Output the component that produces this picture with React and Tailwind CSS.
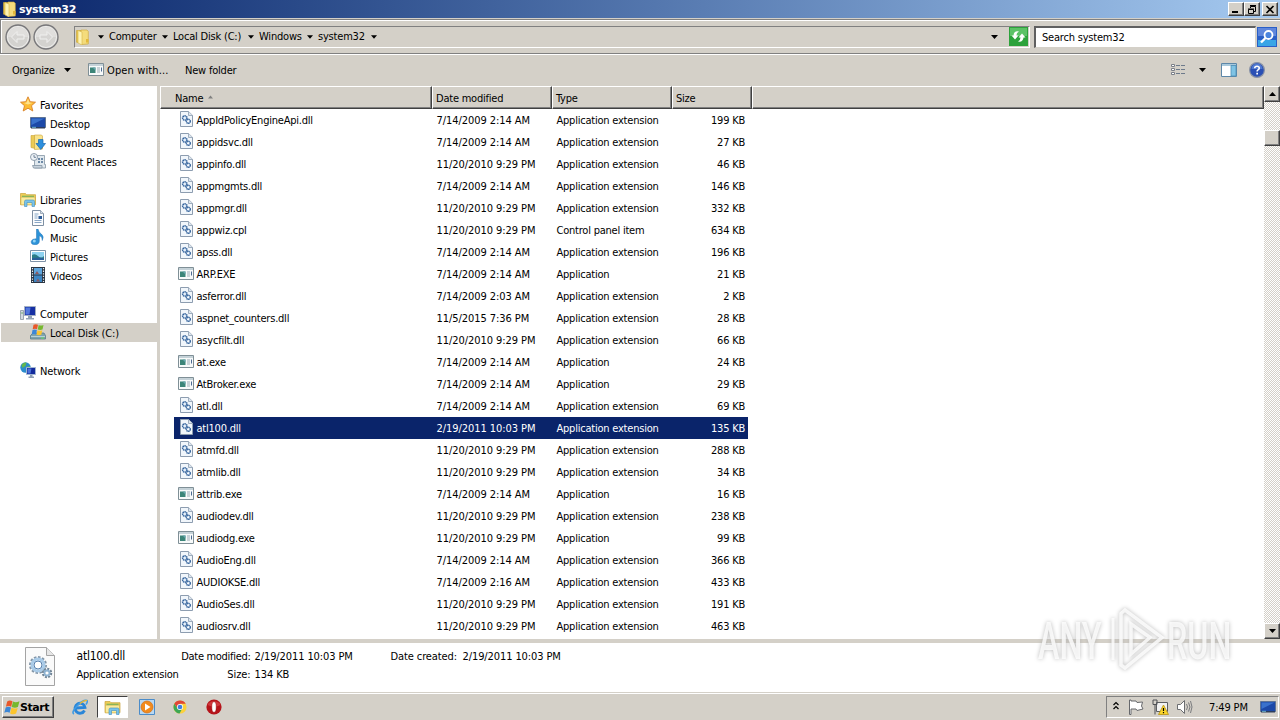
import clsx from 'clsx';

const DLL = 'Application extension';
const EXE = 'Application';

const files = [
    ['AppIdPolicyEngineApi.dll', '7/14/2009 2:14 AM', DLL, '199 KB'],
    ['appidsvc.dll', '7/14/2009 2:14 AM', DLL, '27 KB'],
    ['appinfo.dll', '11/20/2010 9:29 PM', DLL, '46 KB'],
    ['appmgmts.dll', '7/14/2009 2:14 AM', DLL, '146 KB'],
    ['appmgr.dll', '11/20/2010 9:29 PM', DLL, '332 KB'],
    ['appwiz.cpl', '11/20/2010 9:29 PM', 'Control panel item', '634 KB'],
    ['apss.dll', '7/14/2009 2:14 AM', DLL, '196 KB'],
    ['ARP.EXE', '7/14/2009 2:14 AM', EXE, '21 KB'],
    ['asferror.dll', '7/14/2009 2:03 AM', DLL, '2 KB'],
    ['aspnet_counters.dll', '11/5/2015 7:36 PM', DLL, '28 KB'],
    ['asycfilt.dll', '11/20/2010 9:29 PM', DLL, '66 KB'],
    ['at.exe', '7/14/2009 2:14 AM', EXE, '24 KB'],
    ['AtBroker.exe', '7/14/2009 2:14 AM', EXE, '29 KB'],
    ['atl.dll', '7/14/2009 2:14 AM', DLL, '69 KB'],
    ['atl100.dll', '2/19/2011 10:03 PM', DLL, '135 KB'],
    ['atmfd.dll', '11/20/2010 9:29 PM', DLL, '288 KB'],
    ['atmlib.dll', '11/20/2010 9:29 PM', DLL, '34 KB'],
    ['attrib.exe', '7/14/2009 2:14 AM', EXE, '16 KB'],
    ['audiodev.dll', '11/20/2010 9:29 PM', DLL, '238 KB'],
    ['audiodg.exe', '11/20/2010 9:29 PM', EXE, '99 KB'],
    ['AudioEng.dll', '7/14/2009 2:14 AM', DLL, '366 KB'],
    ['AUDIOKSE.dll', '7/14/2009 2:16 AM', DLL, '433 KB'],
    ['AudioSes.dll', '11/20/2010 9:29 PM', DLL, '191 KB'],
    ['audiosrv.dll', '11/20/2010 9:29 PM', DLL, '463 KB'],
];

const Svg = ({ w = 16, h = 16, box, className, children }) => (
    <svg width={w} height={h} viewBox={box || `0 0 ${w} ${h}`} className={clsx('shrink-0', className)}>
        {children}
    </svg>
);

const Caret = ({ up, w = 7, className }) => (
    <Svg w={w} h={4} box="0 0 7 4" className={className}>
        <path d={up ? 'M0 4h7L3.5 0z' : 'M0 0h7L3.5 4z'} fill="currentColor" />
    </Svg>
);

const FolderIcon = ({ className }) => (
    <Svg className={className}>
        <path d="M1.5 1.5h5v12.5l-5-.8z" fill="#e9c84c" stroke="#c9a437" strokeWidth=".6" />
        <path d="M6 1h6l1.3 1.5V15L6 15.6z" fill="#f4dc7c" stroke="#c9a437" strokeWidth=".6" />
        <path d="M3 1.5 7 3v13l-4-2z" fill="#fdf3b4" stroke="#d7b548" strokeWidth=".6" />
        <path d="M11 10h2.5v3.5H11z" fill="#e2b93a" />
    </Svg>
);

const LibraryIcon = ({ w = 16, h = 16 }) => (
    <Svg w={w} h={h} box="0 0 16 16">
        <path d="M.5 2.500h5l1 1.200h9v10H.500z" fill="#efcd55" stroke="#c9a23a" strokeWidth=".7" />
        <path d="M2 4.700h12v2H2z" fill="#7db65f" />
        <path d="M1 6.200h14v7.600H1z" fill="#faeb9c" stroke="#d0ad47" strokeWidth=".5" />
        <path d="M4.500 15.500v-5q0-1.500 1.500-1.500h7q1.500 0 1.500 1.500v5h-2.500V11.500H7v4z" fill="#79c3ea" stroke="#3f8dc0" strokeWidth=".6" />
    </Svg>
);

const DllIcon = () => (
    <Svg w={14} h={16} className="mb-[3px] ml-px">
        <path d="M1.500.500h8l4 3.800V15.500h-12z" fill="#f1f6fb" stroke="#8d9db0" />
        <path d="M9.500.500v4h4" fill="#dde5ee" stroke="#8d9db0" strokeWidth=".8" />
        <circle cx="5.800" cy="7" r="2.200" fill="#cfe0f2" stroke="#32619a" strokeWidth="1.500" strokeDasharray="1.300 .5" />
        <circle cx="9.300" cy="10.300" r="2" fill="#e4eefa" stroke="#32619a" strokeWidth="1.400" strokeDasharray="1.300 .4" />
        <circle cx="5.800" cy="7" r=".7" fill="#fff" />
        <circle cx="9.300" cy="10.300" r=".7" fill="#fff" />
    </Svg>
);

const ExeIcon = ({ className }) => (
    <Svg w={16} h={13} className={className}>
        <path d="M.5.500h15v12H.500z" fill="#f8fafa" stroke="#7f8f96" />
        <path d="M1 1h14v2H1z" fill="#c5d2d8" />
        <path d="M2 4.500h5.500V10H2z" fill="#3c8578" />
        <path d="M4.500 4.500h3v3z" fill="#68a8b0" />
        <path d="M9 5h3M9 7h3M9 9h3" stroke="#9aabb4" />
        <path d="M13.500 4.500v4" stroke="#4b6a92" />
    </Svg>
);

const Monitor = () => (
    <Svg>
        <path d="M.5 2.500h15v10H.500z" fill="#1c49a8" stroke="#5f7494" />
        <path d="M1.500 3.500h13L1.500 10z" fill="#3a72cc" />
        <path d="M1 12h14v1.500H1z" fill="#2e3e5c" />
        <path d="M2 12.300h4" stroke="#7fd0e8" strokeWidth=".8" />
    </Svg>
);

const StarIcon = () => (
    <Svg>
        <path d="M8 .8 10.200 5.700l5.300.5-4 3.500 1.300 5.300L8 12.200 3.200 15l1.300-5.300-4-3.500 5.300-.5z" fill="#fcbc35" stroke="#d9822b" strokeWidth=".9" />
        <path d="M8 2.800 9.400 6.500 12.500 7 8 8.500 4 7l2.600-.5z" fill="#fee38f" />
    </Svg>
);

const DownloadsIcon = () => (
    <Svg>
        <path d="M1 1.500h4v13l-4-1z" fill="#ebcb55" stroke="#c9a23a" strokeWidth=".6" />
        <path d="M4.500 1h7l1 1v13l-8 .5z" fill="#f8e38b" stroke="#c9a23a" strokeWidth=".6" />
        <path d="M8.500 5.500h4.500v4h2.500L10.800 15.500 6 9.500h2.500z" fill="#2d8fdd" stroke="#1967ae" strokeWidth=".7" />
    </Svg>
);

const RecentIcon = () => (
    <Svg>
        <path d="M4.500 2.500h10v9h1v3.500h-11z" fill="#e0e8ee" stroke="#8494a3" strokeWidth=".8" />
        <path d="M2.500 12.500h9.500V15H3.500z" fill="#c8d3dd" stroke="#8494a3" strokeWidth=".8" />
        <path d="M8 5h2v2H8zM11 5h2v2h-2zM8 8h2v2H8zM11 8h2v2h-2z" fill="#6e8aa7" />
        <circle cx="4" cy="4" r="3.500" fill="#eef3f7" stroke="#8795a5" strokeWidth=".9" />
        <path d="M4 2v2.300h2" fill="none" stroke="#51667e" strokeWidth=".8" />
    </Svg>
);

const DocumentIcon = () => (
    <Svg>
        <path d="M2.500.500h8l3 3v12h-11z" fill="#fcfdfe" stroke="#7f90a3" />
        <path d="M10.500.500v3h3" fill="#d7e0ea" stroke="#7f90a3" strokeWidth=".7" />
        <path d="M4.500 4h4M4.500 6h3M4.500 8h3M4.500 10.500h7M4.500 12.500h7" stroke="#7c9cc0" strokeWidth=".9" />
        <path d="M8.500 6h3.500v3H8.500z" fill="#2d5c98" />
    </Svg>
);

const MusicIcon = () => (
    <Svg>
        <path d="M8 0q.5 3.200 3.300 5 3.200 2.500 1 6.500Q12.500 7.500 9.300 6.800V12q0 3.500-4.300 3.800Q1 15.800 1.200 12.500 2 9.500 6.500 9.800V0z" fill="#2d93d8" stroke="#1f70b4" strokeWidth=".5" />
        <circle cx="4.300" cy="12" r="1.500" fill="#92d4f6" />
    </Svg>
);

const PicturesIcon = () => (
    <Svg>
        <path d="M.5 2.500h15v11H.500z" fill="#fff" stroke="#7f93a8" />
        <path d="M2 4h12v8H2z" fill="#8fd2f0" />
        <path d="M2 7q3-2 6 1t6 0v4H2z" fill="#2c7d86" />
        <path d="M2 10.500q6-2 12 0V12H2z" fill="#2b5f9a" />
    </Svg>
);

const VideosIcon = () => (
    <Svg>
        <path d="M1 0h14v16H1z" fill="#2b3542" />
        <path d="M4 1h8v6.500H4z" fill="#5ea5dc" />
        <path d="M4 8.500h8V15H4z" fill="#3d86c4" />
        <path d="m5 7 2-3 2 3zM6 14.500l2-3 2 3z" fill="#8d5a60" />
        <path d="M2.500 1v14M13.500 1v14" stroke="#e8eef4" strokeWidth="1.200" strokeDasharray="1.300 1.300" />
    </Svg>
);

const ComputerIcon = () => (
    <Svg>
        <path d="M.5 5.500h3v9h-3z" fill="#d3dae0" stroke="#8894a0" strokeWidth=".8" />
        <path d="M1.300 8h1.500" stroke="#4ea04d" />
        <path d="M4.500 1.500h11v9h-11z" fill="#1630a4" stroke="#a2afc2" />
        <path d="M5.500 2.500h5l-1 7h-4z" fill="#5277dd" />
        <path d="M8 11h4v2H8zM6 13h8v1.500H6z" fill="#93a3b6" />
    </Svg>
);

const WinFlag = ({ w = 16, h = 16, className }) => (
    <Svg w={w} h={h} box="0 0 16 16" className={className}>
        <path d="M3.200 2q2.500-2 5.300-.2L7.200 7.200q-2.700-1.500-5.300 0z" fill="#e8582a" />
        <path d="M9 2q2.500 1.500 6.500-.2l-1.600 5.700q-3 1.500-6.200-.1z" fill="#76b82e" />
        <path d="M1.700 8q2.500-1.500 5.300 0l-1.400 5.300q-2.500-1.500-5.300 0z" fill="#3c87d6" />
        <path d="M7.500 8.300q2.800 1.500 6.200.2l-1.600 5.600q-3 1.500-6-.2z" fill="#fbc52d" />
    </Svg>
);

const DiskIcon = () => (
    <Svg>
        <path d="M.5 11.500 3 9h11l1.500 2.500v3.500H.500z" fill="#7fa3ad" stroke="#5c7c88" strokeWidth=".8" />
        <path d="M1 12.500h14" stroke="#c7dde2" strokeWidth=".8" />
        <path d="M11 14h3" stroke="#66e05d" />
        <path d="M3.500.7q2.300-1 4.500 0L7 5.200q-2-1-4.300 0z" fill="#e8582a" />
        <path d="M8.700 1q2.200 1 4.800 0l-1 4.500q-2.300.9-4.800 0z" fill="#76b82e" />
        <path d="M2.500 6q2.200-1 4.400 0l-.9 4.500q-2-1-4.300 0z" fill="#3c87d6" />
        <path d="M7.500 6.200q2.200 1 4.800 0l-1 4.500q-2.300.9-4.800 0z" fill="#fbc52d" />
    </Svg>
);

const NetworkIcon = () => (
    <Svg>
        <circle cx="5.500" cy="5.500" r="5.200" fill="#2c8ccc" />
        <path d="M1.500 3q2.500-3 5-2.300L5.500 4l-3 2zM6 5l4-1 .5 3L7 9z" fill="#64b84d" />
        <path d="M6.500 5.500h9v7h-9z" fill="#132b9c" stroke="#a2b6d2" />
        <path d="M7.500 6.500h4l-1 5h-3z" fill="#4a70d8" />
        <path d="M10 13h2.500v1.500H10zM8.500 14.500H14V16H8.500z" fill="#8fa0b4" />
    </Svg>
);

const groups = [
    [
        ['Favorites', StarIcon],
        ['Desktop', Monitor],
        ['Downloads', DownloadsIcon],
        ['Recent Places', RecentIcon],
    ],
    [
        ['Libraries', LibraryIcon],
        ['Documents', DocumentIcon],
        ['Music', MusicIcon],
        ['Pictures', PicturesIcon],
        ['Videos', VideosIcon],
    ],
    [
        ['Computer', ComputerIcon],
        ['Local Disk (C:)', DiskIcon],
    ],
    [['Network', NetworkIcon]],
];

/* Classic raised 3D edge */
const raised = 'bg-[#d4d0c8] border border-t-white border-l-white border-r-[#404040] border-b-[#404040] shadow-[inset_-1px_-1px_0_#808080]';

const WinButton = ({ children, className }) => (
    <button className={clsx('flex h-[14px] w-4 items-center justify-center', raised, className)}>{children}</button>
);

const TitleBar = () => (
    <div className="flex h-[18px] items-center bg-linear-to-r from-[#0a246a] to-[#a6caf0] pr-0.5 pl-0.5">
        <FolderIcon />
        <span className="ml-px pt-px font-['DejaVu_Sans'] text-[11px] font-bold tracking-[-0.35px] text-white">system32</span>
        <div className="ml-auto flex">
            <WinButton>
                <Svg w={12} h={10}><path d="M2 7h6v2H2z" /></Svg>
            </WinButton>
            <WinButton>
                <Svg w={12} h={11}>
                    <path d="M4.500 4V2.500h5v5H8M4 1.500h6" fill="none" stroke="#000" />
                    <path d="M2.500 5.500h5v4h-5zM2 5h6" fill="none" stroke="#000" />
                </Svg>
            </WinButton>
            <WinButton className="ml-0.5">
                <Svg w={10} h={9}><path d="m1.500 1 7 7M8.500 1l-7 7" stroke="#000" strokeWidth="1.600" /></Svg>
            </WinButton>
        </div>
    </div>
);

const NavArrow = ({ flip }) => (
    <Svg w={26} h={26} className={flip && 'rotate-180'}>
        <circle cx="13" cy="13" r="12" fill="#cbc9c5" stroke="#77777a" strokeWidth="1.300" />
        <circle cx="13" cy="13" r="10.500" fill="#d3d2cf" stroke="#efefee" />
        <path d={flip ? 'M3 13a10 10 0 0 0 20 0z' : 'M3 13a10 10 0 0 1 20 0z'} fill="#e0dfdd" />
        <path d="m6.500 13 5.500-5.500V11h7v4h-7v3.500z" fill="#d6d5d3" stroke="#f0f0ef" />
    </Svg>
);

const crumbs = [
    ['Computer', 'w-[64px]'],
    ['Local Disk (C:)', 'w-[86px]'],
    ['Windows', 'w-[59px]'],
    ['system32', 'w-[64px]'],
];

const AddressBar = () => (
    <div className="mt-px flex h-[35px] items-center border-t border-b border-l border-[#808080] pl-1 shadow-[inset_1px_1px_0_#fff,0_1px_0_#fff]">
        <div className="flex gap-0.5">
            <NavArrow />
            <NavArrow flip />
        </div>
        <div className="ml-[15px] flex h-[22px] w-[956px] items-center border border-t-[#808080] border-l-[#808080] border-r-white border-b-white">
            <FolderIcon />
            <Caret w={6} className="ml-[7px]" />
            {crumbs.map(([name, width]) => (
                <div key={name} className={clsx('flex items-center justify-between pl-[5px] tracking-[-0.2px]', width)}>
                    <span>{name}</span>
                    <Caret w={6} />
                </div>
            ))}
            <Caret className="mr-[11px] ml-auto" />
            <Svg w={19} h={19} className="mr-px">
                <path d="M0 0h19v19H0z" fill="#2da23b" />
                <path d="M1 1h17v8H1z" fill="#5cc266" />
                <path d="M2.500 8.500 6 12.500l3.500-4H7.500Q7.500 5.500 10 4.500 5 3.500 4.500 8.500z" fill="#fff" />
                <path d="M16.500 10.500 13 6.500l-3.500 4h2q0 3-2.500 4 5 1 5.500-4z" fill="#fff" />
            </Svg>
        </div>
        <div className="ml-[4px] flex h-[22px] w-[222px] items-center border-t-2 border-l-2 border-r border-b border-t-[#606060] border-l-[#606060] border-r-[#d4d0c8] border-b-[#d4d0c8] bg-white pt-px pl-[6px] tracking-[-0.2px]">
            Search system32
        </div>
        <Svg w={20} h={20} className="ml-px">
            <path d="M0 0h20v20H0z" fill="#2a5fc6" />
            <path d="M1 1h18v8H1z" fill="#6087dc" />
            <path d="M1 13h18v6H1z" fill="#38a5e6" />
            <circle cx="11.500" cy="8" r="4" fill="#4b84de" stroke="#fff" strokeWidth="1.800" />
            <path d="m8.500 11-4.500 4.500" stroke="#fff" strokeWidth="2.400" />
        </Svg>
    </div>
);

const Toolbar = () => (
    <div className="flex h-8 items-center pl-3 tracking-[-0.2px]">
        <span className="w-[52px] pt-px">Organize</span>
        <Caret />
        <div className="ml-[17px] flex items-center gap-[3px]">
            <ExeIcon className="mb-px" />
            <span className="w-[78px] pt-px tracking-[0.12px]">Open with...</span>
        </div>
        <span className="pt-px">New folder</span>
        <div className="mr-[15px] ml-auto flex items-center">
            <Svg w={16} h={14}>
                <path d="M1.500 1.500h3v2h-3zM1.500 5.500h3v2h-3zM1.500 9.500h3v2h-3z" fill="#fff" stroke="#7a7f88" />
                <path d="M6 2.500h4m1 0h4M6 6.500h4m1 0h4M6 10.500h4m1 0h4" stroke="#6d7a8b" />
            </Svg>
            <Caret className="ml-[13px]" />
            <Svg w={16} h={14} className="ml-[15px]">
                <path d="M.5.500h15v13H.500z" fill="#fff" stroke="#5d87a8" />
                <path d="M1 1h14v2H1z" fill="#a9c9dc" />
                <path d="M10 2.500h5V13h-5z" fill="#7fc3e4" stroke="#4b8db4" strokeWidth=".8" />
            </Svg>
            <Svg w={16} h={16} className="ml-[12px]">
                <circle cx="8" cy="8" r="7.400" fill="#2a4fb4" stroke="#8a93a6" strokeWidth="1.200" />
                <path d="M2.500 7a5.500 5.500 0 0 1 11 0z" fill="#5078d0" />
                <path d="M5.700 6.300Q5.800 4.200 8 4.200t2.300 1.900Q10.300 7.200 9 7.900 8.100 8.400 8.100 9.600" fill="none" stroke="#fff" strokeWidth="1.600" />
                <path d="M7.300 10.800h1.700v1.600H7.300z" fill="#fff" />
            </Svg>
        </div>
    </div>
);

const Sidebar = () => (
    <nav className="flex w-[157px] flex-col gap-[19px] bg-white pt-[9px] tracking-[-0.15px]">
        {groups.map((items) => (
            <div key={items[0][0]}>
                {items.map(([name, Icon], i) => (
                    <div
                        key={name}
                        className={clsx(
                            'flex h-[19px] items-center gap-1',
                            name === 'Local Disk (C:)' ? 'ml-px -mr-px bg-[#d4d0c8] pl-[29px]' : i === 0 ? 'pl-5' : 'pl-[30px]'
                        )}
                    >
                        <div className="mb-px"><Icon /></div>
                        <span className="pt-[3px]">{name}</span>
                    </div>
                ))}
            </div>
        ))}
    </nav>
);

const HeadCell = ({ className, children }) => (
    <div className={clsx('flex items-center border-t border-r border-b border-l border-t-white border-r-[#404040] border-b-[#404040] border-l-white bg-[#d4d0c8] pt-[3px] shadow-[inset_-1px_-1px_0_#808080]', className)}>
        {children}
    </div>
);

const FileList = () => (
    <section className="flex min-w-0 flex-1 flex-col bg-white tracking-[-0.22px]">
        <div className="flex h-[23px] shrink-0">
            <HeadCell className="w-[272px] pl-[14px]">
                Name
                <Caret up w={5} className="mb-[5px] ml-[5px] text-[#808080]" />
            </HeadCell>
            <HeadCell className="w-[120px] pl-[3px]">Date modified</HeadCell>
            <HeadCell className="w-[120px] pl-[3px]">Type</HeadCell>
            <HeadCell className="w-20 pl-[3px]">Size</HeadCell>
            <HeadCell className="flex-1" />
        </div>
        {files.map(([name, date, type, size]) => (
            <div
                key={name}
                className={clsx('ml-[14px] flex h-[22px] w-[574px] shrink-0 items-center pt-px pl-1', name === 'atl100.dll' && 'bg-[#0a246a] text-white')}
            >
                <div className="w-[18.5px]">{type === EXE ? <ExeIcon className="mb-[3px]" /> : <DllIcon />}</div>
                <span className="w-[240px]">{name}</span>
                <span className="w-[120px] tracking-[-0.06px]">{date}</span>
                <span className="w-[120px]">{type}</span>
                <span className="flex-1 pr-[3px] text-right">{size}</span>
            </div>
        ))}
    </section>
);

const Scrollbar = () => (
    <div className="flex w-4 flex-col bg-[repeating-conic-gradient(#d4d0c8_0_25%,#fff_0_50%)] bg-[length:2px_2px]">
        <div className={clsx('flex h-4 items-center justify-center', raised)}><Caret up /></div>
        <div className={clsx('mt-7 h-4', raised)} />
        <div className={clsx('mt-auto flex h-4 items-center justify-center', raised)}><Caret /></div>
    </div>
);

const Watermark = () => (
    <div className="absolute top-[605px] left-[1038px] flex items-center font-['Roboto'] text-[52px] leading-none font-medium text-white/80 drop-shadow-[0_0_2px_#aaa]">
        <span className="w-[69px] origin-left scale-x-[0.62] pt-1 tracking-normal">ANY</span>
        <Svg w={60} h={70}>
            <path d="M14 60V8.500L18 5l37 27.500L18 63z M24 49V19l19 13.500z" fill="none" stroke="#fff" strokeOpacity=".8" strokeWidth="3.500" />
            <path d="M6 13v42" stroke="#fff" strokeOpacity=".8" strokeWidth="3" />
        </Svg>
        <span className="w-[68px] origin-left scale-x-[0.62] pt-1 tracking-normal">RUN</span>
    </div>
);

const DetailsPane = () => (
    <div className="flex h-[49px] bg-white pl-6">
        <Svg w={33} h={41} className="mt-1">
            <path d="M1.500.500h21l8 8v30h-29z" fill="#fafafa" stroke="#a4a4a4" />
            <path d="M22.500.500v8h8" fill="#e6e6e6" stroke="#a4a4a4" />
            <circle cx="14" cy="18" r="7.500" fill="none" stroke="#8396a8" strokeWidth="3" strokeDasharray="2.400 1.500" />
            <circle cx="14" cy="18" r="6" fill="#fff" stroke="#a9cbe8" strokeWidth="3" />
            <circle cx="14" cy="18" r="4" fill="#fff" stroke="#557fae" />
            <circle cx="23" cy="26" r="4" fill="none" stroke="#6f8395" strokeWidth="2.500" strokeDasharray="1.900 1.200" />
            <circle cx="23" cy="26" r="2.500" fill="#fff" stroke="#8eb3d2" strokeWidth="1.800" />
        </Svg>
        <div className="mt-[5px] ml-[19.5px] w-[104px] leading-[18px] tracking-[-0.22px]">
            <p className="-mt-px text-[12px]">atl100.dll</p>
            <p className="mt-px">Application extension</p>
        </div>
        <div className="mt-[5px] grid h-9 grid-cols-[70px_132px_68px_auto] gap-x-[4px] leading-[18px] tracking-[-0.1px] whitespace-nowrap">
            <span className="text-right tracking-[-0.3px]">Date modified:</span>
            <span>2/19/2011 10:03 PM</span>
            <span className="tracking-[-0.1px]">Date created:</span>
            <span>2/19/2011 10:03 PM</span>
            <span className="text-right">Size:</span>
            <span>134 KB</span>
        </div>
    </div>
);

const Taskbar = () => (
    <footer className="flex h-7 items-center border-t border-[#d4d0c8] pt-px shadow-[inset_0_1px_0_#fff]">
        <button className={clsx('ml-0.5 flex h-[22px] w-[52px] items-center', raised)}>
            <WinFlag w={16} h={17} className="ml-px" />
            <span className="pt-px font-['DejaVu_Sans'] text-[11px] font-bold tracking-[-0.45px]">Start</span>
        </button>
        <Svg className="ml-[18px]">
            <path d="M12.500 11.500A5 5 0 1 1 13 8.500L4 9" fill="none" stroke="#2a86d8" strokeWidth="2.800" />
            <path d="M2 15Q-1 13.500 5 7t10-5.500Q16 2.500 14 5.500" fill="none" stroke="#3f9be4" strokeWidth="1.600" />
            <path d="M8 4.500Q13.500.500 15 1.700" fill="none" stroke="#edb92e" strokeWidth="1.300" />
        </Svg>
        <div className="ml-[9px] flex h-[22px] w-[31px] items-center justify-center border border-t-[#404040] border-l-[#404040] border-r-white border-b-white bg-white">
            <LibraryIcon w={17} h={16} />
        </div>
        <Svg className="ml-[11px]">
            <path d="M.5.500h15v15H.500z" fill="#b9d8f2" stroke="#4b8cc9" />
            <circle cx="8" cy="8" r="6" fill="#f28a1c" stroke="#d26e12" strokeWidth=".7" />
            <path d="m6 4.500 5.500 3.500L6 11.500z" fill="#fff" />
        </Svg>
        <Svg w={14} h={14} box="0 0 16 16" className="ml-[18px]">
            <circle cx="8" cy="8" r="7.500" fill="#fbd13b" />
            <path d="M1.500 4.300A7.500 7.500 0 0 1 14.500 4.300H8L5 9.500z" fill="#e04637" />
            <path d="M1.500 4.300A7.500 7.500 0 0 0 7.500 15.500L10.500 10 5 9.500z" fill="#3da755" />
            <circle cx="8" cy="8" r="3.500" fill="#fff" />
            <circle cx="8" cy="8" r="2.700" fill="#3f7fe0" />
        </Svg>
        <Svg className="ml-[19px]">
            <circle cx="8" cy="8" r="7.600" fill="#b5141a" />
            <path d="M1.500 6a7 6 0 0 1 13 0q-6 3-13 0" fill="#d0383c" />
            <ellipse cx="8" cy="8" rx="2.200" ry="5.300" fill="#fff" stroke="#8d0b10" strokeWidth=".4" />
        </Svg>
        <div className="mr-px ml-auto flex h-[22px] w-[173px] items-center border border-t-[#808080] border-l-[#808080] border-r-white border-b-white">
            <Svg w={6} h={9} className="mb-[3px] ml-[6px]">
                <path d="m.5 4 2.500-2.500L5.500 4M.500 8 3 5.500 5.500 8" fill="none" stroke="#000" strokeWidth="1.200" />
            </Svg>
            <Svg w={17} h={16} className="ml-[9px]">
                <path d="M1.500 1v14.500h1.500V10h5l1 1.500 6-1.500-1.500-3 1-4-5.500.5-1-1.500H3V1z" fill="#fff" stroke="#66686c" />
            </Svg>
            <Svg w={17} h={16} className="ml-[7px]">
                <path d="M4.500 3.500h11v9h-11z" fill="#f2f2f2" stroke="#5c5e62" />
                <path d="M1 1v4.500h4V1M3 5.500V15.500M2 2V0M4 2V0" fill="none" stroke="#4f5155" />
                <path d="m11.500 6 5 9.500h-10z" fill="#fbd52a" stroke="#b69213" strokeWidth=".8" />
                <path d="M11.500 9v3M11.500 13v1.200" stroke="#000" strokeWidth="1.200" />
            </Svg>
            <Svg w={18} h={16} className="ml-[7px]">
                <path d="M1.500 5.500h3l4-4v13l-4-4h-3z" fill="#fff" stroke="#6b6d70" />
                <path d="M10.500 5q2 3 0 6M12.500 3.500q3 4.500 0 9M14.500 2q3 6 0 12" fill="none" stroke="#797b7e" />
            </Svg>
            <span className="ml-[15px] w-[51px] pt-px tracking-[-0.15px] whitespace-nowrap">7:49 PM</span>
            <Monitor />
        </div>
    </footer>
);

export default function App() {
    return (
        <div className="relative flex h-[720px] w-[1280px] flex-col overflow-hidden bg-[#d4d0c8] font-['DejaVu_Sans_Condensed','DejaVu_Sans',sans-serif] text-[11px] leading-[14px] tracking-[-0.3px] text-black">
            <TitleBar />
            <AddressBar />
            <Toolbar />
            <main className="flex h-[553px]">
                <Sidebar />
                <div className="w-[3px]" />
                <FileList />
                <Scrollbar />
            </main>
            <div className="h-1 shrink-0" />
            <DetailsPane />
            <Taskbar />
            <Watermark />
        </div>
    );
}
